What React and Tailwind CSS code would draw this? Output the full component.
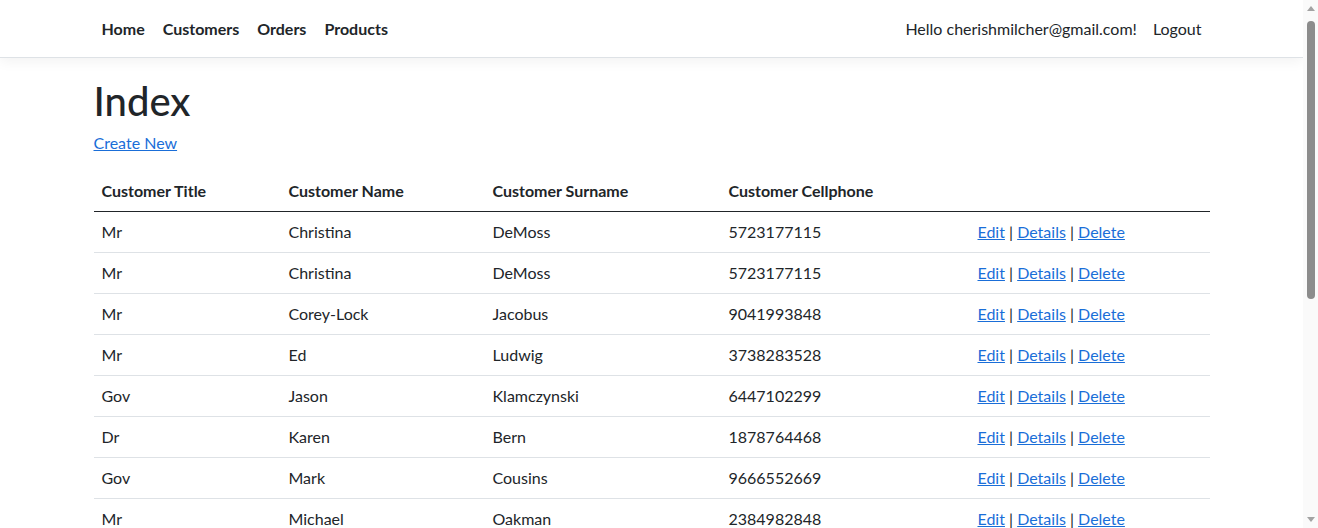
const customers = [
  ['Mr', 'Christina', 'DeMoss', '5723177115'],
  ['Mr', 'Christina', 'DeMoss', '5723177115'],
  ['Mr', 'Corey-Lock', 'Jacobus', '9041993848'],
  ['Mr', 'Ed', 'Ludwig', '3738283528'],
  ['Gov', 'Jason', 'Klamczynski', '6447102299'],
  ['Dr', 'Karen', 'Bern', '1878764468'],
  ['Gov', 'Mark', 'Cousins', '9666552669'],
  ['Mr', 'Michael', 'Oakman', '2384982848'],
];

const font = { fontFamily: '"Segoe UI", Lato, "Noto Sans", sans-serif' };

function Navbar() {
  return (
    <header className="bg-white border-b border-[#dee2e6] shadow-[0_4px_12px_rgba(0,0,0,0.05)] mb-4">
      <nav className="mx-auto max-w-[1140px] px-3 h-[57px] flex items-center justify-between">
        <ul className="flex -ml-px">
          {['Home', 'Customers', 'Orders', 'Products'].map(l => (
            <li key={l}>
              <a href="#" className="block px-[9px] py-2 leading-6 text-[16px] font-bold text-[#212529]">{l}</a>
            </li>
          ))}
        </ul>
        <ul className="flex">
          <li><span className="block px-2 py-2 leading-6 text-[#212529]">Hello cherishmilcher@gmail.com!</span></li>
          <li><a href="#" className="block px-2 py-2 leading-6 text-[#212529]">Logout</a></li>
        </ul>
      </nav>
    </header>
  );
}

// static drawing of the window scrollbar seen in the screenshot
function Scrollbar() {
  return (
    <div className="w-[15px] shrink-0 bg-[#fafafa] flex flex-col items-center">
      <div className="h-[17px] flex items-center justify-center">
        <svg width="8" height="5" viewBox="0 0 8 5"><path d="M4 0L8 5H0z" fill="#a3a3a3" /></svg>
      </div>
      <div className="w-[8px] h-[278px] rounded-full bg-[#8c8c8c] mt-[4px]" />
      <div className="flex-1" />
      <div className="h-[17px] flex items-center justify-center">
        <svg width="8" height="5" viewBox="0 0 8 5"><path d="M0 0H8L4 5z" fill="#a3a3a3" /></svg>
      </div>
    </div>
  );
}

export default function App() {
  return (
    <div className="h-[528px] flex overflow-hidden bg-white text-[#212529] text-[16px] leading-6" style={font}>
      <div className="flex-1 min-w-0 overflow-hidden">
        <Navbar />
        <main className="mx-auto max-w-[1140px] px-3 pb-3">
          <h1 className="text-[40px] leading-[1.2] font-medium mb-[6px] pt-[3px]">Index</h1>
          <p className="mb-4">
            <a href="#" className="text-[#1a6ed8] underline">Create New</a>
          </p>
          <table className="w-full border-collapse mb-4">
            <thead>
              <tr className="border-b border-[#212529] text-left">
                <th className="w-[187px] p-2 font-bold">Customer Title</th>
                <th className="w-[204px] p-2 font-bold">Customer Name</th>
                <th className="w-[236px] p-2 font-bold">Customer Surname</th>
                <th className="w-[249px] p-2 font-bold">Customer Cellphone</th>
                <th className="p-2"></th>
              </tr>
            </thead>
            <tbody>
              {customers.map((c, i) => (
                <tr key={i} className="border-b border-[#dee2e6]">
                  {c.map((v, j) => (
                    <td key={j} className="p-2">{v}</td>
                  ))}
                  <td className="p-2">
                    <a href="#" className="text-[#1a6ed8] underline">Edit</a> |{' '}
                    <a href="#" className="text-[#1a6ed8] underline">Details</a> |{' '}
                    <a href="#" className="text-[#1a6ed8] underline">Delete</a>
                  </td>
                </tr>
              ))}
            </tbody>
          </table>
        </main>
      </div>
      <Scrollbar />
    </div>
  );
}
